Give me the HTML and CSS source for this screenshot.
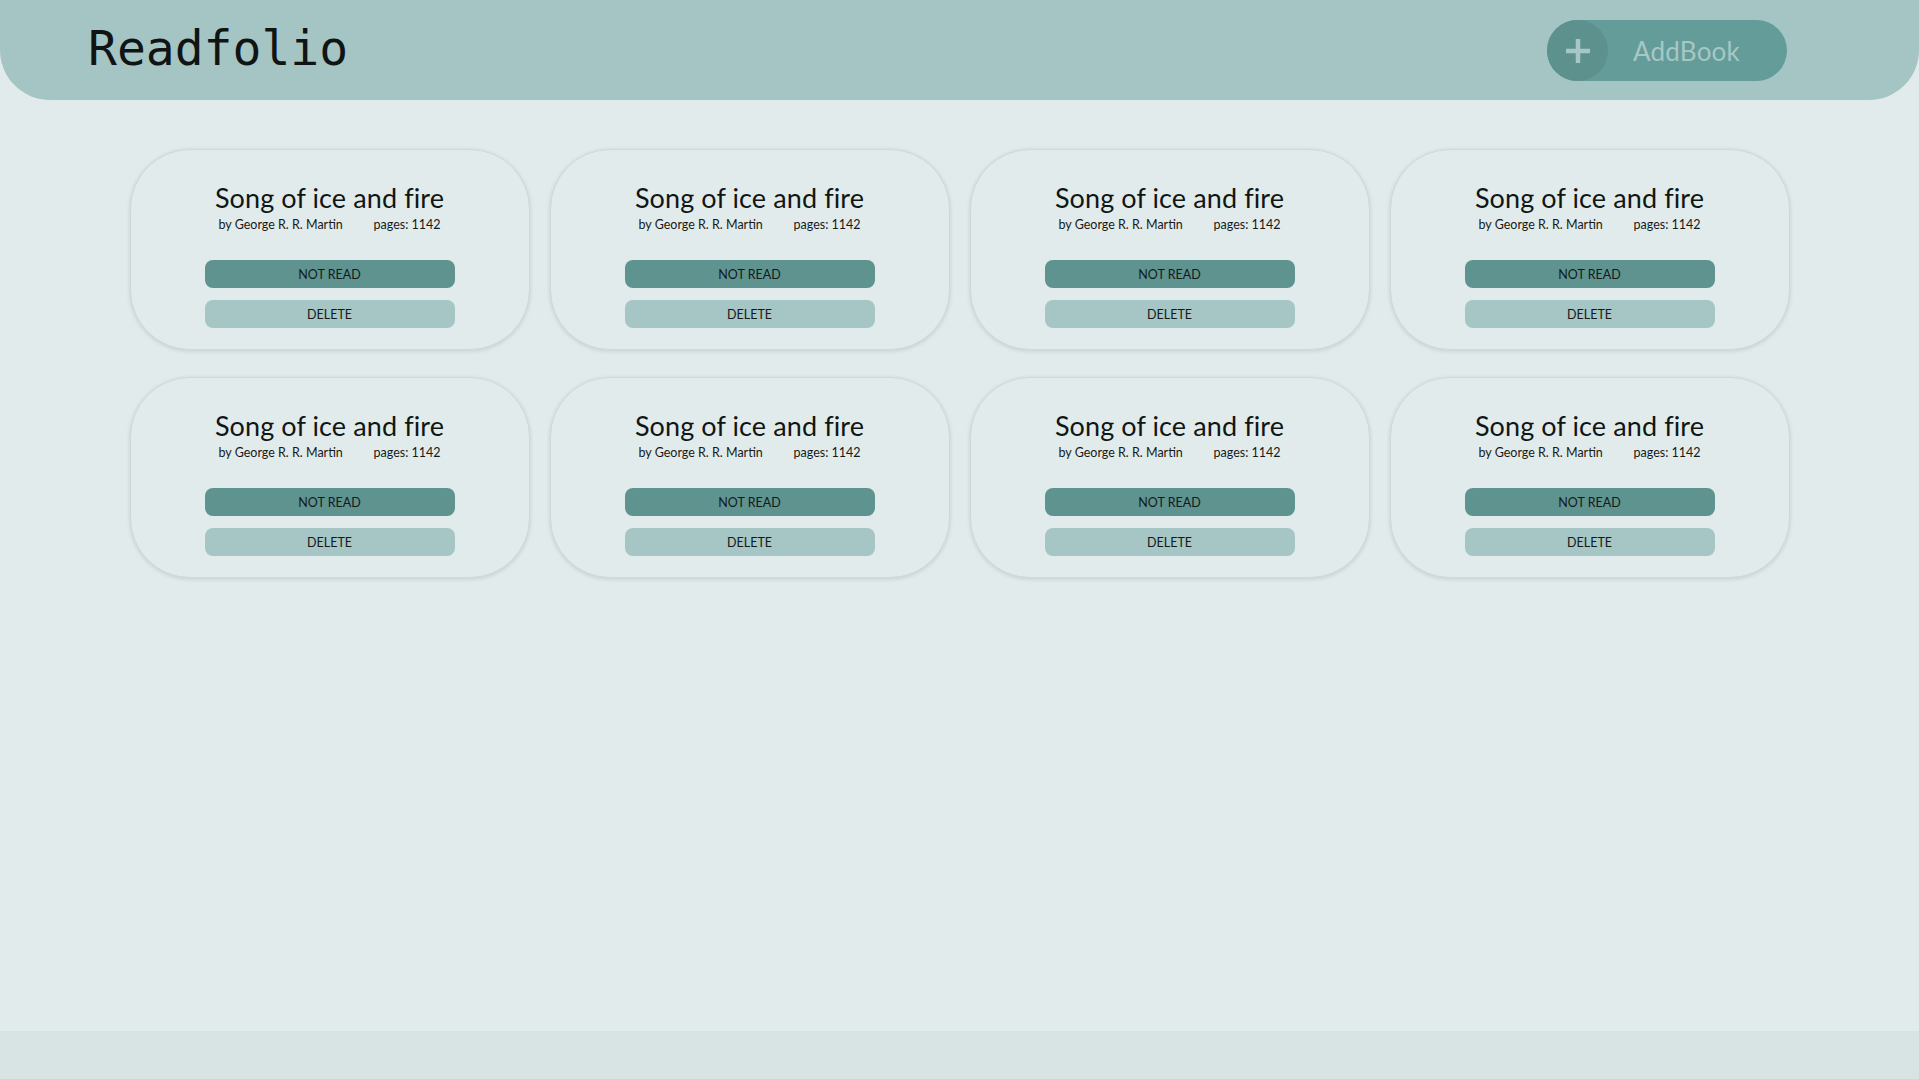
FILE: index.html
```html
<!DOCTYPE html>
<html lang="en">
<head>
<meta charset="utf-8">
<title>Readfolio</title>
<link rel="stylesheet" href="styles.css">
</head>
<body>
<header class="topbar">
  <h1 class="logo">Readfolio</h1>
  <button class="add-btn">
    <span class="add-icon">
      <svg width="26" height="26" viewBox="0 0 26 26"><path d="M13 1v24M1 13h24" stroke="#a7c7c6" stroke-width="4.5" fill="none"/></svg>
    </span>
    <span class="add-label">AddBook</span>
  </button>
</header>
<main class="library">
  <div class="grid">
    <div class="card"><h2 class="title">Song of ice and fire</h2><div class="meta"><span>by George R. R. Martin</span><span>pages: 1142</span></div><button class="btn read">NOT READ</button><button class="btn del">DELETE</button></div>
    <div class="card"><h2 class="title">Song of ice and fire</h2><div class="meta"><span>by George R. R. Martin</span><span>pages: 1142</span></div><button class="btn read">NOT READ</button><button class="btn del">DELETE</button></div>
    <div class="card"><h2 class="title">Song of ice and fire</h2><div class="meta"><span>by George R. R. Martin</span><span>pages: 1142</span></div><button class="btn read">NOT READ</button><button class="btn del">DELETE</button></div>
    <div class="card"><h2 class="title">Song of ice and fire</h2><div class="meta"><span>by George R. R. Martin</span><span>pages: 1142</span></div><button class="btn read">NOT READ</button><button class="btn del">DELETE</button></div>
    <div class="card"><h2 class="title">Song of ice and fire</h2><div class="meta"><span>by George R. R. Martin</span><span>pages: 1142</span></div><button class="btn read">NOT READ</button><button class="btn del">DELETE</button></div>
    <div class="card"><h2 class="title">Song of ice and fire</h2><div class="meta"><span>by George R. R. Martin</span><span>pages: 1142</span></div><button class="btn read">NOT READ</button><button class="btn del">DELETE</button></div>
    <div class="card"><h2 class="title">Song of ice and fire</h2><div class="meta"><span>by George R. R. Martin</span><span>pages: 1142</span></div><button class="btn read">NOT READ</button><button class="btn del">DELETE</button></div>
    <div class="card"><h2 class="title">Song of ice and fire</h2><div class="meta"><span>by George R. R. Martin</span><span>pages: 1142</span></div><button class="btn read">NOT READ</button><button class="btn del">DELETE</button></div>
  </div>
</main>
<footer class="footer"></footer>
</body>
</html>
```
FILE: styles.css
```css
* { box-sizing: border-box; }
html, body { margin: 0; padding: 0; }
body {
  min-height: 100vh;
  display: flex;
  flex-direction: column;
  background: #e2ebeb;
  font-family: "Lato", "Noto Sans", sans-serif;
  color: #121716;
}
.topbar {
  height: 100px;
  background: #a5c5c4;
  border-radius: 0 0 50px 50px;
  display: flex;
  align-items: center;
  justify-content: space-between;
  padding: 0 132px 0 88px;
}
.logo {
  margin: 0;
  font-family: "DejaVu Sans Mono", "Liberation Mono", monospace;
  font-weight: 400;
  font-size: 48px;
  color: #101413;
  line-height: 1;
  margin-top: -5px;
}
.add-btn {
  width: 240px;
  height: 61px;
  border: none;
  padding: 0;
  border-radius: 31px;
  background: #639c98;
  display: flex;
  align-items: center;
  cursor: pointer;
  margin-top: 1px;
}
.add-icon {
  width: 61px;
  height: 61px;
  border-radius: 50%;
  background: #5c918e;
  display: flex;
  align-items: center;
  justify-content: center;
}
.add-label {
  margin-left: 25px;
  font-family: "Lato", sans-serif;
  font-size: 26px;
  color: #a7c7c6;
  letter-spacing: 0.2px;
}
.library {
  flex: 1;
  padding-top: 49px;
}
.grid {
  display: grid;
  grid-template-columns: repeat(4, 400px);
  column-gap: 20px;
  row-gap: 27px;
  justify-content: center;
}
.card {
  height: 201px;
  border: 1px solid #d0d9d9;
  border-radius: 60px;
  background: #e2ebeb;
  box-shadow: 0 1px 4px rgba(0, 0, 0, 0.13);
  display: flex;
  flex-direction: column;
  align-items: center;
  padding-top: 31px;
}
.title {
  margin: 0;
  font-size: 27px;
  font-weight: 400;
  line-height: 34px;
  letter-spacing: 0.1px;
  color: #111615;
}
.meta {
  margin-top: 2px;
  width: 222px;
  display: flex;
  justify-content: space-between;
  font-size: 12.5px;
  line-height: 16px;
  color: #151a19;
}
.btn {
  width: 250px;
  height: 28px;
  border: none;
  border-radius: 8px;
  font-family: "Lato", sans-serif;
  font-size: 12.5px;
  color: #141918;
  padding: 0;
  cursor: pointer;
}
.read {
  margin-top: 27px;
  background: #5e9390;
}
.del {
  margin-top: 12px;
  background: #a5c6c5;
}
.footer {
  height: 48px;
  background: #d7e4e3;
}
```
